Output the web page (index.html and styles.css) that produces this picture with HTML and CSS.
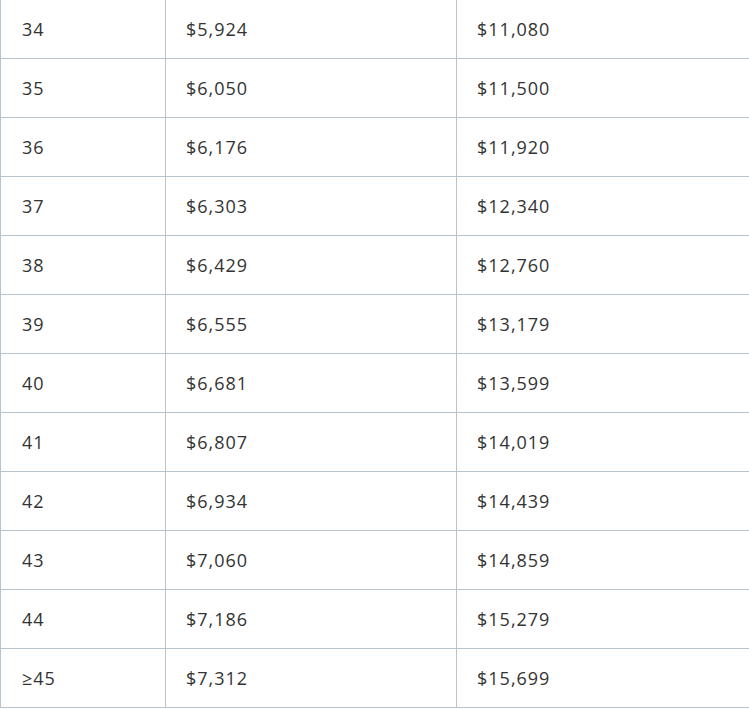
FILE: index.html
```html
<!DOCTYPE html>
<html>
<head>
<meta charset="utf-8">
<link rel="stylesheet" href="styles.css">
</head>
<body>
<table class="rates">
<colgroup><col class="c1"><col class="c2"><col class="c3"></colgroup>
<tbody>
<tr><td>34</td><td>$5,924</td><td>$11,080</td></tr>
<tr><td>35</td><td>$6,050</td><td>$11,500</td></tr>
<tr><td>36</td><td>$6,176</td><td>$11,920</td></tr>
<tr><td>37</td><td>$6,303</td><td>$12,340</td></tr>
<tr><td>38</td><td>$6,429</td><td>$12,760</td></tr>
<tr><td>39</td><td>$6,555</td><td>$13,179</td></tr>
<tr><td>40</td><td>$6,681</td><td>$13,599</td></tr>
<tr><td>41</td><td>$6,807</td><td>$14,019</td></tr>
<tr><td>42</td><td>$6,934</td><td>$14,439</td></tr>
<tr><td>43</td><td>$7,060</td><td>$14,859</td></tr>
<tr><td>44</td><td>$7,186</td><td>$15,279</td></tr>
<tr><td>≥45</td><td>$7,312</td><td>$15,699</td></tr>
</tbody>
</table>
</body>
</html>
```
FILE: styles.css
```css
html, body {
  margin: 0;
  padding: 0;
  background: #ffffff;
}
body {
  font-family: "Open Sans", "Liberation Sans", sans-serif;
  color: #333333;
}
.rates {
  border-collapse: collapse;
  table-layout: fixed;
  width: 749px;
  margin-top: -1px;
}
.c1 { width: 165px; }
.c2 { width: 291px; }
.c3 { width: 293px; }
.rates td {
  border: 1px solid #b7c3cf;
  height: 58px;
  padding: 0 0 0 20px;
  box-sizing: border-box;
  font-size: 18px;
  letter-spacing: 1px;
  line-height: 24px;
  vertical-align: middle;
}
.rates td:first-child {
  padding-left: 21px;
}
.rates tr {
  height: 59px;
}
```
